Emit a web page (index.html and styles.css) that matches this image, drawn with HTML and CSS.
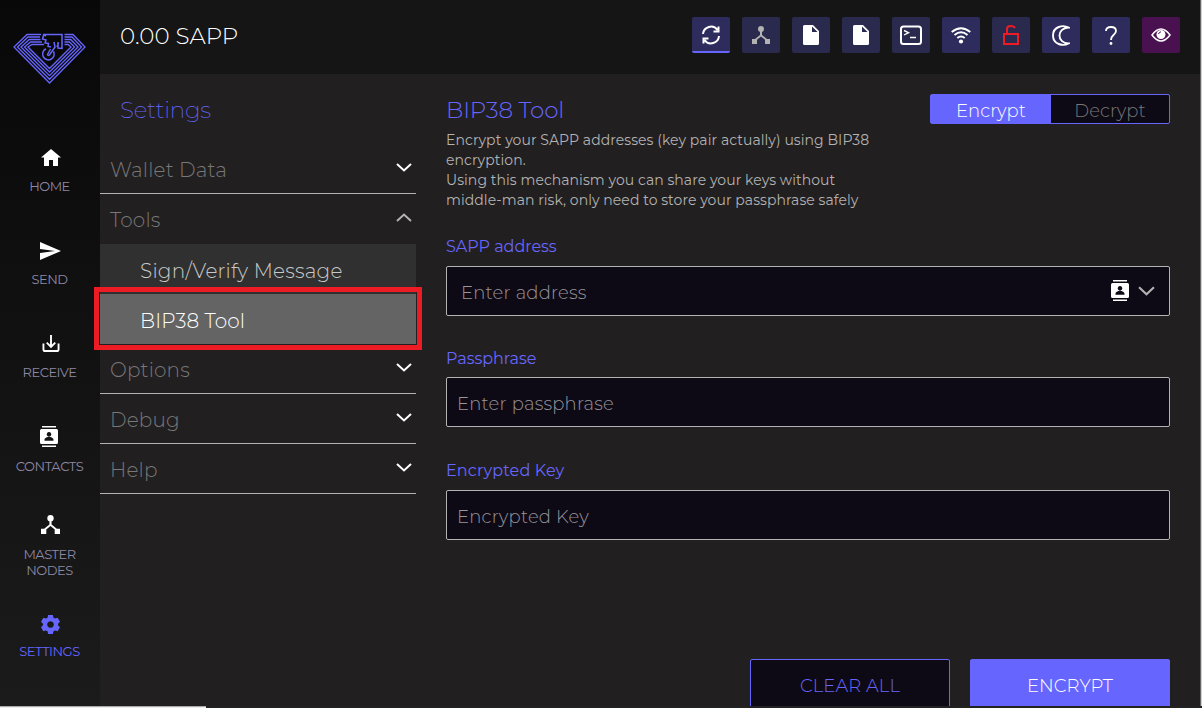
FILE: index.html
```html
<!DOCTYPE html>
<html lang="en"><head><meta charset="utf-8"><title>SAPP Wallet</title><link rel="stylesheet" href="styles.css"></head>
<body>
<svg class="defs" width="0" height="0"><defs>
<symbol id="nodes" viewBox="0 0 18 18"><circle cx="9" cy="3" r="3"/><path d="M8 5h2v4l5 4h3v5h-5v-4.200l-4-3.300-4 3.300V18H0v-5h3l5-4z"/></symbol>
<symbol id="contact" viewBox="0 0 18 21"><path d="M2 0h14v1.500H2zM2 19.500h14V21H2z"/><path fill-rule="evenodd" d="M1.500 3h15Q18 3 18 4.500v12q0 1.500-1.500 1.500h-15Q0 18 0 16.500v-12Q0 3 1.500 3zM9 6a2.300 2.300 0 1 0 .01 0zM4.500 14.800h9v-1c0-2-3-3-4.500-3s-4.500 1-4.500 3z"/></symbol>
<symbol id="down" viewBox="0 0 16 9"><path d="M1 1l7 6.500L15 1" fill="none" stroke="currentColor" stroke-width="2"/></symbol>
<symbol id="doc" viewBox="0 0 16 20"><path fill-rule="evenodd" d="M1.500 0H10l6 6v12.500q0 1.500-1.500 1.500h-13Q0 20 0 18.500v-17Q0 0 1.500 0zM9 1.500V7h5.500z"/></symbol>
</defs></svg>
<div class="app">
<nav class="side">
<svg class="logo" viewBox="0 0 74 51"><g fill="none" stroke="#6666ff" stroke-width="1.300"><path d="M28 1.500H14L1 14l35.500 36L72 14 60 1.500h-8.500M27 4H15L4.500 14l32 32.300L68.500 14 59 4h-7.500M27.500 6.500H16.300L8 14l28.500 28.700L65 14l-7.300-7.500h-6.200M29 9H17.500L11.500 14l25 25 25-25-5-5h-5M31 11.500H19L15 14l21.500 21.500L58 14l-3-2.500h-3.500"/><path stroke-width="1.500" d="M33 3l-3-1.500h19v14l-4-.5V9M30.500 2.500L29.500 6l3.500 1-1 3 3.500.5-.5 3 3 .5M41 9l1 5-5.500 8q-1.500 1-2-.5l3-5.500M45.500 10l-1.500 4M33 15.800a5.800 5.800 0 1 0 7.500 2.500"/></g></svg>
<a class="item"><svg class="i-home" viewBox="0 0 20 17"><path d="M10 0l10 8.500h-3V17h-5v-6H8v6H3V8.500H0z"/></svg><span>HOME</span></a>
<a class="item send"><svg class="i-send" viewBox="0 0 21 18"><path d="M0 0l21 9-21 9v-7l15-2-15-2z"/></svg><span>SEND</span></a>
<a class="item receive"><svg class="i-home" viewBox="0 0 18 18"><path d="M1 9v6q0 2 2 2h12q2 0 2-2V9M9 0v12M4.500 8L9 12.500 13.500 8" fill="none" stroke="#fff" stroke-width="2"/></svg><span>RECEIVE</span></a>
<a class="item contacts"><svg class="i-contact"><use href="#contact"/></svg><span>CONTACTS</span></a>
<a class="item master"><svg class="i-node"><use href="#nodes"/></svg><span>MASTER<br>NODES</span></a>
<a class="item settings"><svg class="i-gear" viewBox="0 0 20 20"><path fill-rule="evenodd" d="M7.500 0h5l.6 2.800 1.700 1 2.700-.9L20 7.200l-2.100 1.900v1.800L20 12.800l-2.500 4.300-2.700-.9-1.700 1-.6 2.800h-5l-.6-2.800-1.700-1-2.700.9L0 12.800l2.100-1.900V9.100L0 7.200l2.500-4.300 2.700.9 1.700-1zM10 6.500a3.500 3.500 0 1 0 .01 0z"/></svg><span>SETTINGS</span></a>
</nav>
<div class="main">
<header class="top"><div class="balance">0.00 SAPP</div>
<div class="tools">
<i class="tool sync"><svg viewBox="0 0 20 20" width="20" height="20"><path d="M2 9a8 8 0 0 1 14.500-4M18 11a8 8 0 0 1-14.500 4M17.500 1.500V6.500h-5M2.500 18.500v-5h5" fill="none" stroke="#fff" stroke-width="2"/></svg></i>
<i class="tool dim gray"><svg width="18" height="18"><use href="#nodes"/></svg></i>
<i class="tool dim"><svg width="16" height="20"><use href="#doc"/></svg></i>
<i class="tool dim"><svg width="16" height="20"><use href="#doc"/></svg></i>
<i class="tool dim"><svg width="22" height="20" viewBox="0 0 22 20"><rect x="1" y="1.500" width="20" height="17.500" rx="2.500" fill="none" stroke="#fff" stroke-width="2"/><path d="M4 5.500l4.500 2.200L4 10M10 12.500h6" fill="none" stroke="#fff" stroke-width="1.400"/></svg></i>
<i class="tool"><svg width="20" height="18" viewBox="0 0 20 18"><path d="M.7 6Q10-1.500 19.300 6M3.500 9Q10 3.500 16.500 9M6.300 12Q10 9 13.700 12" fill="none" stroke="#fff" stroke-width="1.900"/><circle cx="10" cy="15.500" r="2.100"/></svg></i>
<i class="tool dim"><svg width="16" height="20" viewBox="0 0 16 20"><path d="M1 9h14v10H1zM4 9V4q0-3 3.500-3T12 3" fill="none" stroke="#ee1b24" stroke-width="2"/></svg></i>
<i class="tool"><svg width="18" height="21" viewBox="0 0 18 21"><path d="M16.500 2.500C11-.5 1 1.500 1 10.500s10 11 15.500 8C4.500 18 4.500 3 16.500 2.500z" fill="none" stroke="#fff" stroke-width="1.900"/></svg></i>
<i class="tool"><svg width="12" height="19" viewBox="0 0 12 19"><path d="M1 5Q1 1 6 1t5 4q0 2-2.500 4T6 14" fill="none" stroke="#fff" stroke-width="1.800"/><circle cx="6" cy="17.500" r="1.400"/></svg></i>
<i class="tool eye"><svg width="20" height="14" viewBox="0 0 20 14"><path d="M1 7Q10-5 19 7 10 19 1 7z" fill="none" stroke="#fff" stroke-width="1.500"/><circle cx="10" cy="6.500" r="4.500"/><path d="M7.500 6Q8 4 10 3.800" fill="none" stroke="#4a1150"/></svg></i>
</div></header>
<div class="body">
<aside class="menu"><h2>Settings</h2>
<div class="row"><span>Wallet Data</span><svg><use href="#down"/></svg></div>
<div class="row open"><span>Tools</span><svg><use href="#down"/></svg></div>
<div class="sub"><span>Sign/Verify Message</span></div>
<div class="sub active"><span>BIP38 Tool</span><div class="mark"></div></div>
<div class="row"><span>Options</span><svg><use href="#down"/></svg></div>
<div class="row"><span>Debug</span><svg><use href="#down"/></svg></div>
<div class="row"><span>Help</span><svg><use href="#down"/></svg></div>
</aside>
<section class="panel">
<div class="head"><div class="intro"><h1>BIP38 Tool</h1><p>Encrypt your SAPP addresses (key pair actually) using BIP38<br>encryption.<br>Using this mechanism you can share your keys without<br>middle-man risk, only need to store your passphrase safely</p></div>
<div class="toggle"><b>Encrypt</b><span>Decrypt</span></div></div>
<label>SAPP address</label><div class="field address"><span>Enter address</span><svg class="book"><use href="#contact"/></svg><svg class="chev"><use href="#down"/></svg></div>
<label>Passphrase</label><div class="field f-pass"><span>Enter passphrase</span></div>
<label class="key">Encrypted Key</label><div class="field"><span>Encrypted Key</span></div>
<div class="actions"><button class="clear">CLEAR ALL</button><button class="encrypt">ENCRYPT</button></div>
</section></div></div>
<div class="edge"></div></div>
<footer class="bottom"><div></div></footer>
</body></html>
```
FILE: styles.css
```css
*{box-sizing:border-box}
body{margin:0;width:1202px;height:708px;overflow:hidden;background:#221f20;font-family:Montserrat,Inter,"Open Sans",sans-serif;font-weight:300;color:#b3b3b3}
.defs{display:block;height:0}
svg{display:block;fill:currentColor;flex:none}
.app{display:flex;height:706px;overflow:hidden}
.side{width:100px;flex:none;background:linear-gradient(#080808,#1b1b1b);padding-top:33px}
.logo{width:74px;height:51px;margin-left:13px}
.item{display:flex;flex-direction:column;align-items:center;height:93px;color:#fff;font-size:13px;line-height:16px;text-align:center}
.logo + .item{margin-top:65px}
.item svg{height:17px;width:20px;margin-left:1px}
.item .i-send{width:21px;height:18px;margin-bottom:-1px}
.item span{margin:12px 1px 0 0;color:#8d88a5;font-weight:400;letter-spacing:-.5px}
.item .i-contact{width:18px;height:21px;margin-left:-2px}
.contacts{margin-top:-2px;height:89px}
.item.contacts span{margin-top:11px;letter-spacing:-.4px}
.item .i-node,.item .i-gear{width:19px;height:19px;margin-left:0}
.item.settings{color:#6666ff;margin-top:7px}
.item.settings span{margin-top:9px;color:#6666ff}
.main{width:1100px;display:flex;flex-direction:column}
.top{height:74px;flex:none;background:#151515;display:flex;justify-content:space-between;align-items:flex-start;padding:17px 20px 0}
.balance{font-size:23px;line-height:38px;color:#fff}
.tools{display:flex;gap:12px}
.tool{width:38px;height:36px;border-radius:2px;background:#2e2c5c;display:grid;place-items:center;color:#fff}
.dim{background:#2a294e}
.tool.sync{border-bottom:2px solid #6666ff}
.tool.sync svg{margin-top:2px}
.gray{color:#b3b3b3}
.eye{background:#4a1150}
.body{display:flex;height:632px}
.menu{width:316px}
.menu h2{margin:0;height:70px;padding:17px 20px;font-size:23px;line-height:38px;font-weight:200;letter-spacing:-.25px;color:#6666ff}
.row{height:50px;padding:2px 4px 0 10px;display:flex;justify-content:space-between;align-items:center;border-bottom:1px solid #b3b3b3;font-size:20px;letter-spacing:.15px;color:#787878}
.row svg{width:16px;height:9px;color:#fff;margin-top:-4px}
.row.open{border-color:transparent}
.row.open svg{transform:rotate(180deg);color:#b3b3b3}
.sub{height:50px;background:#303030;padding:3px 0 0 40px;display:flex;align-items:center;font-size:20px;letter-spacing:.22px;position:relative;color:#c8c8c8}
.sub.active{background:#646464;color:#fff;letter-spacing:.1px}
.mark{position:absolute;left:-6px;top:-7px;width:328px;height:63px;border:5px solid #ed1c24;z-index:1}
.panel{width:724px;margin-left:30px;padding-top:20px;display:flex;flex-direction:column}
.panel > *{flex:none}
.head{display:flex;justify-content:space-between;height:142px}
h1{font-size:23px;line-height:32px;font-weight:300;letter-spacing:-.15px;color:#6666ff;margin:0 0 4px}
p{margin:0;font-size:14px;line-height:20px;white-space:nowrap;font-weight:400;letter-spacing:.06px;color:#b3b3b3}
.toggle{width:240px;height:30px;border:1px solid #6666ff;border-radius:2px;background:#0e0a15;display:grid;grid-template:28px/120px 1fr;text-align:center;font-size:18px;line-height:32px;color:#787878}
.toggle b{font-weight:300;background:#6666ff;color:#fff}
label{height:30px;line-height:22px;font-size:16px;font-weight:400;letter-spacing:-.03px;color:#6666ff}
.key{letter-spacing:.15px}
.field{height:50px;margin-bottom:32px;border:1px solid #b3b3b3;border-radius:2px;background:#0e0a15;display:flex;align-items:center;padding:3px 14px 0 10px;font-size:18px;letter-spacing:.2px;color:#98959c}
.field.address{padding-left:14px}
.f-pass{margin-top:-1px;margin-bottom:33px}
.book{width:18px;height:21px;margin:-4px 0 0 auto;color:#fff}
.chev{width:17px;height:10px;margin:-3px 0 0 9px;color:#b3b3b3}
.actions{display:flex;justify-content:flex-end;gap:20px;margin-top:87px}
button{width:200px;height:52px;border:1px solid #6666ff;border-radius:2px;background:#0e0a15;color:#6666ff;font:300 18px Montserrat,Inter,sans-serif;letter-spacing:.1px;padding:2px 0 0}
.encrypt{background:#6666ff;color:#fff}
.edge{width:2px;background:linear-gradient(90deg,#656565 50%,#cfcfcf 50%)}
.bottom{height:2px;background:#222}
.bottom div{width:206px;height:2px;background:#eee;border-top:1px solid #aaa}
```
